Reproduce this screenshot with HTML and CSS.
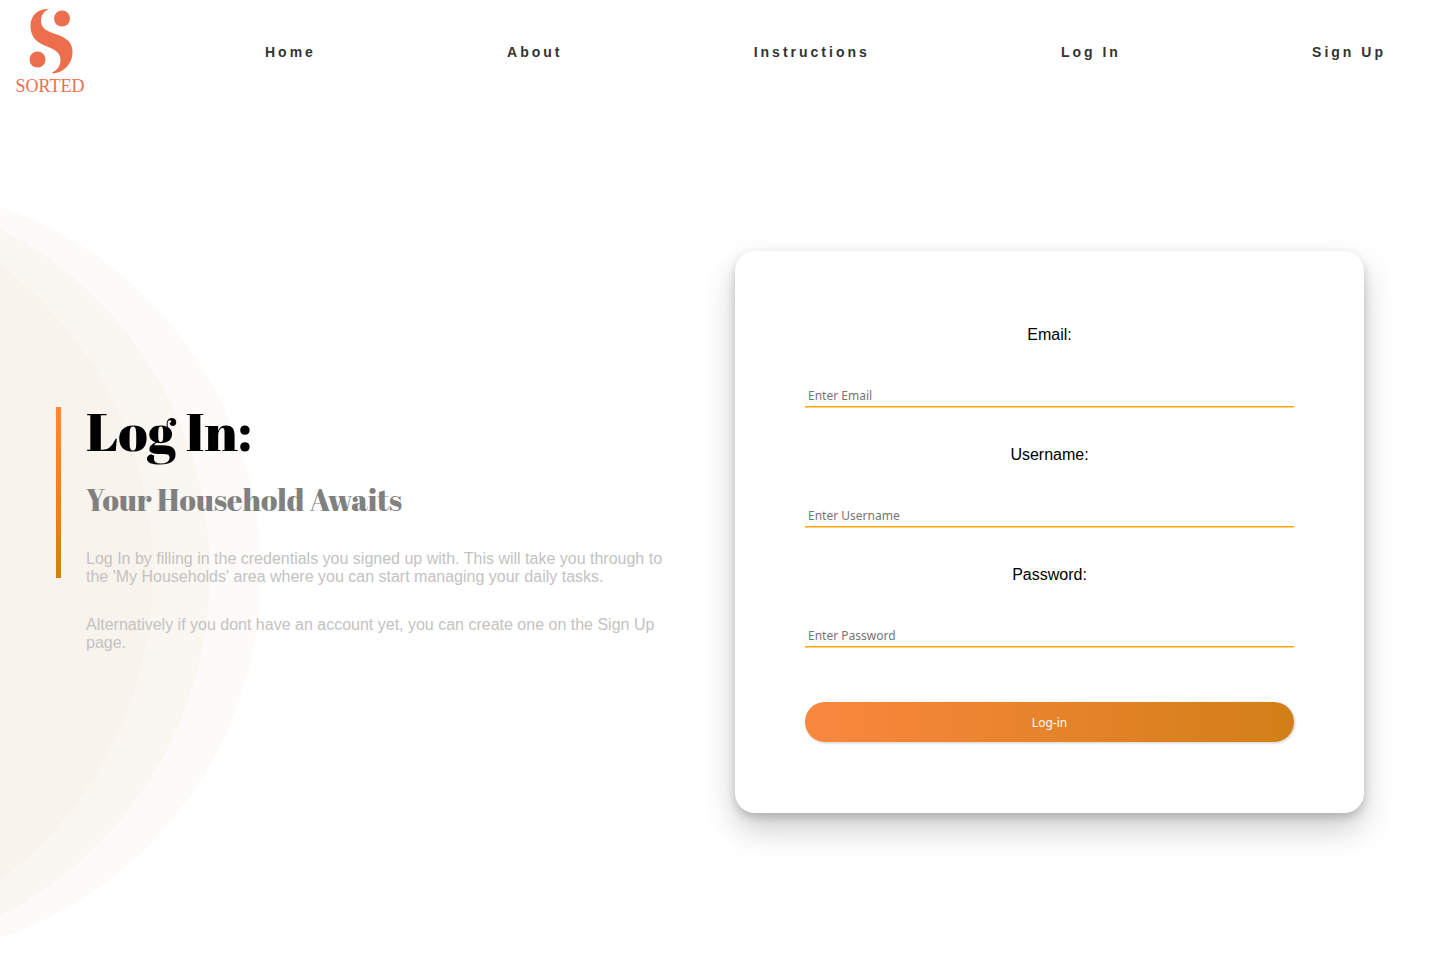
FILE: index.html
```html
<!DOCTYPE html>
<html lang="en">
<head>
  <meta charset="utf-8">
  <meta name="viewport" content="width=device-width, initial-scale=1">
  <title>Sorted | Log In</title>
  <link rel="stylesheet" href="styles.css">
</head>
<body>
  <header class="site-header">
    <a class="logo" href="#" aria-label="Sorted">
      <svg width="100" height="104" viewBox="0 0 100 104" aria-hidden="true">
        <path d="M47.5 9C38 9 30.500 15.500 30.500 26C30.500 38 38 43 46 46C54 49.500 60.500 52 60.500 60C60.500 65 58 70 52 72.500Q53 74 56 73C66 71 72.500 62 72.500 52C72.500 42 66 38 57 34.500C48 31.500 41 29 41 21C41 16 43 12 48 9.500Z"/>
        <circle cx="62" cy="18.500" r="8"/>
        <circle cx="37.500" cy="59.500" r="8"/>
        <text class="logo-text" x="50" y="92" text-anchor="middle">SORTED</text>
      </svg>
    </a>
    <nav class="site-nav">
      <a href="#">Home</a>
      <a href="#">About</a>
      <a href="#">Instructions</a>
      <a href="#">Log In</a>
      <a href="#">Sign Up</a>
    </nav>
  </header>

  <div class="backdrop" aria-hidden="true">
    <span class="disc disc-outer"></span>
    <span class="disc disc-middle"></span>
    <span class="disc disc-inner"></span>
  </div>

  <main class="page">
    <section class="intro">
      <span class="accent"></span>
      <div class="intro-body">
        <h1>Log In:</h1>
        <h2>Your Household Awaits</h2>
        <p>Log In by filling in the credentials you signed up with. This will take you through to the 'My Households' area where you can start managing your daily tasks.</p>
        <p>Alternatively if you dont have an account yet, you can create one on the Sign Up page.</p>
      </div>
    </section>

    <form class="card">
      <div class="field">
        <label for="email">Email:</label>
        <input id="email" type="email" placeholder="Enter Email">
      </div>
      <div class="field">
        <label for="username">Username:</label>
        <input id="username" type="text" placeholder="Enter Username">
      </div>
      <div class="field">
        <label for="password">Password:</label>
        <input id="password" type="password" placeholder="Enter Password">
      </div>
      <button class="submit" type="submit">Log-in</button>
    </form>
  </main>
</body>
</html>
```
FILE: styles.css
```css
* {
  box-sizing: border-box;
  margin: 0;
  padding: 0;
}

body {
  position: relative;
  min-height: 100vh;
  background: #fff;
  font-family: Arial, "Liberation Sans", sans-serif;
  font-size: 16px;
  line-height: 18px;
}

.site-header {
  display: flex;
  align-items: center;
  padding-right: 60px;
}

.logo svg {
  display: block;
  fill: #ec6e4c;
}

.logo-text {
  font-family: "Liberation Serif", serif;
  font-size: 18px;
}

.site-nav {
  flex: 1;
  display: flex;
  justify-content: space-between;
  padding-left: 165px;
}

.site-nav a {
  color: #333;
  font-size: 14px;
  font-weight: bold;
  letter-spacing: 3px;
  text-decoration: none;
}

.backdrop {
  position: absolute;
  inset: 0;
  z-index: -1;
  overflow: hidden;
}

.disc {
  position: absolute;
  top: 186px;
  width: 80vh;
  height: 80vh;
  border-radius: 50%;
}

.disc-outer {
  left: calc(261px - 80vh);
  background: #fdfbf9;
}

.disc-middle {
  left: calc(210px - 80vh);
  background: #faf7f2;
}

.disc-inner {
  left: calc(153px - 80vh);
  background: #f8f3ed;
}

.page {
  display: grid;
  grid-template-columns: 616fr 629fr;
  column-gap: 63px;
  align-items: center;
  min-height: calc(100vh - 104px);
  padding: 0 82px 6px 56px;
}

.intro {
  display: flex;
  align-items: flex-start;
  gap: 25px;
  padding-bottom: 6px;
}

.accent {
  flex: none;
  width: 5px;
  height: 171px;
  background: linear-gradient(#fb873f, #d27f17);
}

.intro h1,
.intro h2 {
  font-family: "Abril Fatface", "Liberation Serif", serif;
  font-weight: normal;
}

.intro h1 {
  font-size: 54px;
  line-height: 48px;
}

.intro h2 {
  margin-top: 27px;
  color: #808080;
  font-size: 30px;
  line-height: 36px;
}

.intro p {
  margin-top: 30px;
  color: #c4c2c1;
}

.intro h2 + p {
  margin-top: 32px;
}

.card {
  display: flex;
  flex-direction: column;
  gap: 34px;
  padding: 70px 70px 71px;
  border-radius: 20px;
  background: #fff;
  box-shadow: 0 16px 32px rgba(0, 0, 0, 0.2), 0 4px 10px rgba(0, 0, 0, 0.18);
}

.field {
  display: flex;
  flex-direction: column;
}

.field label {
  line-height: 28px;
  text-align: center;
}

.field input {
  height: 24px;
  margin-top: 34px;
  padding: 2px 3px 0;
  border: 0;
  border-bottom: 1px solid #ffa500;
  outline: 0;
  background: none;
  box-shadow: 0 1px 0 #ffd27f;
  font-family: "Noto Sans", sans-serif;
  font-size: 12px;
}

.field input::placeholder {
  color: #757575;
}

.submit {
  height: 40px;
  margin-top: 21px;
  border: 0;
  border-radius: 20px;
  background: linear-gradient(to right, #fb873f, #d27f17);
  box-shadow: 1px 1px 3px rgba(0, 0, 0, 0.2);
  color: #fff;
  font-family: "Noto Sans", sans-serif;
  font-size: 12px;
  cursor: pointer;
}

@media (max-width: 900px) {
  .site-nav {
    flex-wrap: wrap;
    gap: 12px;
    padding-left: 24px;
  }

  .page {
    grid-template-columns: 1fr;
    row-gap: 40px;
    padding: 40px 24px;
  }

  .card {
    padding: 40px 24px;
  }
}
```
